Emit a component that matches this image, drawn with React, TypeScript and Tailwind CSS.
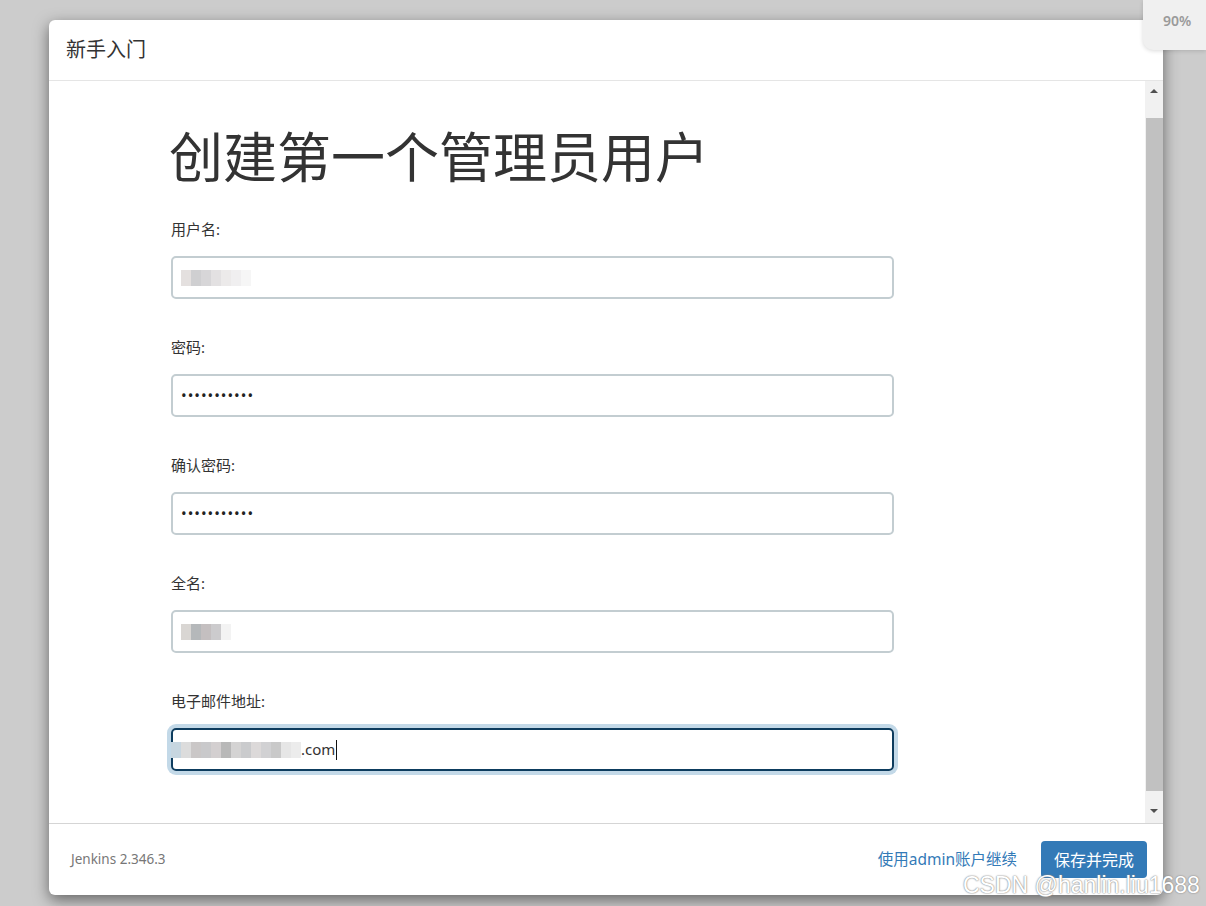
import React from "react";

const font = { fontFamily: '"Noto Sans", "Noto Sans CJK SC", sans-serif' };

// mosaic blocks standing in for the blurred values
const Mosaic = ({ cells }: { cells: string[] }) => (
    <div className="flex h-[16px]">
        {cells.map((c, i) => (
            <div key={i} className={`w-[10px] h-full ${c}`} />
        ))}
    </div>
);

const Field = ({ label, children, focused }: { label: string; children: React.ReactNode; focused?: boolean }) => (
    <div className="mb-[38px]">
        <div className="text-[15px] leading-[20px] text-[#333] mb-[17px]">{label}</div>
        <div
            className={
                focused
                    ? "w-[723px] h-[43px] rounded-[5px] border-2 border-[#0d3c5e] ring-4 ring-[#c3d9e8] flex items-center px-[8px] text-[15px] text-[#333]"
                    : "w-[723px] h-[43px] rounded-[5px] border-2 border-[#c3cdd1] flex items-center px-[8px] text-[15px] text-[#333]"
            }
        >
            {children}
        </div>
    </div>
);

export default function App() {
    return (
        <div className="relative w-[1206px] h-[906px] bg-[#cccccc] overflow-hidden pt-[20px] pl-[49px]" style={font}>
            {/* dialog */}
            <div className="w-[1114px] h-[875px] bg-white rounded-[6px] shadow-[0_5px_15px_rgba(0,0,0,0.5)] flex flex-col">
                <div className="h-[61px] shrink-0 border-b border-[#e5e5e5] flex items-center px-[17px] text-[20px] text-[#333]">
                    新手入门
                </div>

                <div className="flex-1 flex min-h-0">
                    <div className="flex-1 pl-[122px] pt-[46px]">
                        <h1 className="text-[54px] leading-[60px] text-[#333] mb-[32px] -ml-[2px]">创建第一个管理员用户</h1>

                        <Field label="用户名:">
                            <Mosaic cells={["bg-[#e4e0df]", "bg-[#cfcfd1]", "bg-[#d7d6d8]", "bg-[#e3e1e2]", "bg-[#eceaea]", "bg-[#f0eff0]", "bg-[#f6f6f6]"]} />
                        </Field>

                        <Field label="密码:">
                            <span className="tracking-[1px] text-[#222]">•••••••••••</span>
                        </Field>

                        <Field label="确认密码:">
                            <span className="tracking-[1px] text-[#222]">•••••••••••</span>
                        </Field>

                        <Field label="全名:">
                            <Mosaic cells={["bg-[#d9d6d3]", "bg-[#b5b8ba]", "bg-[#c4bfc0]", "bg-[#cccbcd]", "bg-[#f3f3f3]"]} />
                        </Field>

                        <Field label="电子邮件地址:" focused>
                            <div className="-ml-[10px]">
                                <Mosaic cells={["bg-[#c7d6e0]", "bg-[#dcdcdc]", "bg-[#cac7c7]", "bg-[#c9c9cb]", "bg-[#d3cfd0]", "bg-[#b8b8b8]", "bg-[#d4d3d3]", "bg-[#cacbcd]", "bg-[#dcd9d9]", "bg-[#d1d1d3]", "bg-[#c9c9c9]", "bg-[#e6e6e6]", "bg-[#ececec]"]} />
                            </div>
                            <span>.com</span>
                            <span className="w-px h-[20px] bg-[#111] ml-px" />
                        </Field>
                    </div>

                    {/* scrollbar */}
                    <div className="w-[18px] shrink-0 bg-[#f1f1f1] flex flex-col items-center">
                        <div className="h-[20px] flex items-center justify-center">
                            <div className="w-0 h-0 border-l-[4px] border-r-[4px] border-b-[4px] border-l-transparent border-r-transparent border-b-[#505050]" />
                        </div>
                        <div className="h-[17px]" />
                        <div className="flex-1 w-[17px] bg-[#c1c1c1]" />
                        <div className="h-[8px]" />
                        <div className="h-[24px] flex items-center justify-center">
                            <div className="w-0 h-0 border-l-[4px] border-r-[4px] border-t-[4px] border-l-transparent border-r-transparent border-t-[#505050]" />
                        </div>
                    </div>
                </div>

                <div className="h-[72px] shrink-0 border-t border-[#d5d5d5] flex items-center justify-between pl-[22px] pr-[16px]">
                    <span className="text-[13.5px] text-[#777]">Jenkins 2.346.3</span>
                    <div className="flex items-center gap-[24px]">
                        <a className="text-[15.5px] text-[#337ab7]">使用admin账户继续</a>
                        <button className="w-[106px] h-[37px] rounded-[4px] bg-[#337ab7] text-white text-[16px]">保存并完成</button>
                    </div>
                </div>
            </div>

            {/* zoom badge */}
            <div className="absolute top-0 right-0 w-[63px] h-[50px] bg-[#f0f0f0] rounded-bl-[10px] shadow-[0_1px_4px_rgba(0,0,0,0.15)] pt-[10px] pl-[20px] text-[14px] font-semibold text-[#9a9a9a]">
                90%
            </div>

            {/* watermark */}
            <div className="absolute left-[963px] top-[870px] text-[23px] leading-[30px] text-white [text-shadow:0_0_2px_#888,0_0_1px_#888]" style={{ fontFamily: '"Liberation Sans", sans-serif' }}>
                CSDN @hanlin.liu1688
            </div>
        </div>
    );
}
